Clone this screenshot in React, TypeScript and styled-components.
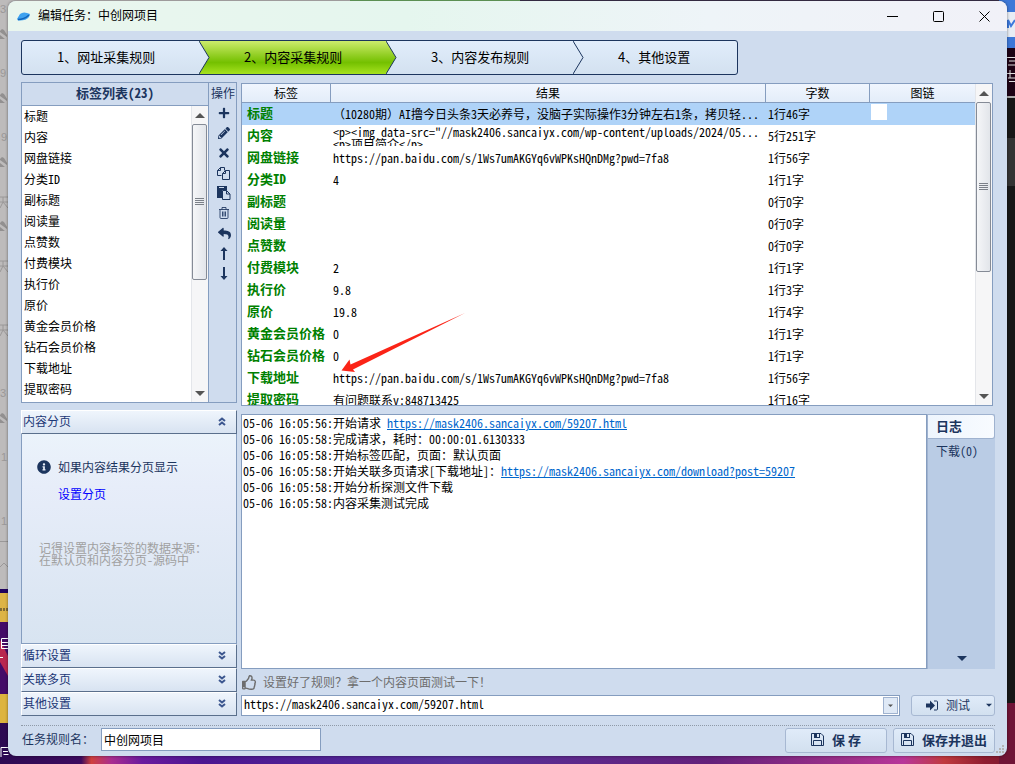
import React, { useState } from 'react';
import styled, { createGlobalStyle, css } from 'styled-components';
import { FaInfoCircle, FaPlus, FaPencilAlt, FaTimes, FaReply, FaRegThumbsUp } from 'react-icons/fa';

const ink = '#1c355e';
const line = '#859dbf';
const face = '#cfdcee';

const GlobalStyle = createGlobalStyle`
  *, *::before, *::after { box-sizing: border-box; }
  body {
    margin: 0;
    font-family: "Noto Sans Mono CJK SC", "Noto Sans CJK SC", monospace;
    font-size: 12px;
    line-height: 16px;
    color: #000;
  }
  button, input { font: inherit; color: inherit; }
  button { padding: 0; cursor: pointer; }
  ul { margin: 0; padding: 0; list-style: none; }
`;

/* ---------- desktop ---------- */

const Desktop = styled.div`
  position: relative;
  display: flex;
  flex-direction: column;
  min-height: 100vh;
  padding: 1px 8px 8px;
  overflow: hidden;
  background:
    linear-gradient(90deg, #c0bdbd 0 350px, #6fae64 350px 520px, #3f3350 520px) top / 100% 2px no-repeat,
    linear-gradient(90deg, #2d0a52, #3d0a5e 8%, #d0403c 9%, #a82c90 11%, #6a1a9e 14%, #4b1590 20%, #57309a 45%, #63207a 70%, #a0308a 84%, #b8359a 89%, #c03a3e 93%, #8f1c30 97%, #7c1830);
`;

const LeftEdge = styled.svg`
  position: absolute;
  left: 0;
  top: 0;
  width: 16px;
  height: 764px;
`;

const RightEdge = styled.svg`
  position: absolute;
  right: 0;
  top: 0;
  width: 16px;
  height: 764px;
`;

const Window = styled.main`
  position: relative;
  flex: 1;
  display: flex;
  flex-direction: column;
  border-radius: 8px;
  overflow: hidden;
  background: ${face};
  box-shadow: 0 0 3px rgba(0, 0, 0, 0.5);
`;

const TitleBar = styled.header`
  display: flex;
  align-items: center;
  height: 30px;
  padding-left: 9px;
  background: linear-gradient(90deg, #eaf6ee, #e5f6ee 40%, #eef4f8 70%, #f1f1f8);
`;

const Title = styled.h1`
  flex: 1;
  margin: 0 0 2px 8px;
  font-family: "Noto Sans CJK SC", sans-serif;
  font-size: 12px;
  font-weight: 400;
  line-height: 16px;
`;

const CaptionButton = styled.button`
  display: grid;
  place-items: center;
  width: 46px;
  height: 28px;
  border: 0;
  background: none;
`;

const Body = styled.div`
  flex: 1;
  display: flex;
  flex-direction: column;
  padding: 9px 12px 0 13px;
`;

/* ---------- wizard steps ---------- */

const Steps = styled.nav`
  display: flex;
  align-self: flex-start;
  width: 717px;
  max-width: 100%;
  height: 35px;
  border: 1px solid ${ink};
  border-radius: 3px;
  background: linear-gradient(#e1edfb, #d3e1f0);
`;

const Step = styled.button<{ $active?: boolean }>`
  position: relative;
  z-index: ${p => (p.$active ? 0 : 1)};
  flex: 0 0 187px;
  padding: 0 0 2px 35px;
  border: 0;
  background: none;
  text-align: left;
  font-family: "Noto Sans CJK SC", sans-serif;
  font-size: 13px;
  &:last-child { flex: 1; }
`;

const Chevron = styled.svg`
  position: absolute;
  left: 177px;
  top: 0;
`;

const ActiveShape = styled.svg`
  position: absolute;
  z-index: -1;
  left: -10px;
  top: 0;
`;

/* ---------- columns ---------- */

const Columns = styled.div`
  flex: 1;
  display: flex;
  gap: 4px;
  padding-top: 7px;
`;

const LeftColumn = styled.div`
  flex: 0 0 216px;
  display: flex;
  flex-direction: column;
  gap: 7px;
`;

const RightColumn = styled.div`
  flex: 1;
  min-width: 0;
  display: flex;
  flex-direction: column;
  padding-top: 1px;
`;

/* ---------- scroll bar ---------- */

const ScrollTrack = styled.div`
  flex: 0 0 17px;
  display: flex;
  flex-direction: column;
  padding-right: 1px;
  border-left: 1px solid #e4e6ea;
  background: #f6f6f7;
`;

const ScrollArrow = styled.button`
  display: grid;
  place-items: center;
  flex: 0 0 18px;
  border: 0;
  background: none;
`;

const ScrollThumb = styled.div<{ $length: number }>`
  display: grid;
  place-items: center;
  height: ${p => p.$length}px;
  border: 1px solid #858b96;
  border-radius: 2px;
  background: linear-gradient(90deg, #f5f6f8, #e2e5ea);
`;

const ScrollSpace = styled.div`
  flex: 1;
`;

/* ---------- tag list ---------- */

const TagPanel = styled.section`
  display: flex;
  height: 321px;
  border: 1px solid ${line};
`;

const TagBox = styled.div`
  flex: 1;
  display: flex;
  flex-direction: column;
  border-right: 1px solid ${line};
`;

const TagHeading = styled.h2`
  flex: 0 0 23px;
  margin: 0;
  padding-top: 1px;
  border-bottom: 1px solid ${line};
  color: ${ink};
  font-size: 13px;
  font-weight: 700;
  line-height: 18px;
  text-align: center;
`;

const TagBody = styled.div`
  flex: 1;
  min-height: 0;
  display: flex;
  background: #fff;
`;

const TagItems = styled.ul`
  flex: 1;
  overflow: hidden;
`;

const TagItem = styled.li`
  height: 21px;
  padding-left: 2px;
  line-height: 20px;
`;

const Tools = styled.div`
  flex: 0 0 27px;
  display: flex;
  flex-direction: column;
  align-items: flex-end;
  padding-right: 1px;
  color: ${ink};
`;

const ToolsTitle = styled.span`
  height: 20px;
  line-height: 20px;
`;

const Tool = styled.button`
  display: grid;
  place-items: center;
  width: 22px;
  height: 20px;
  border: 0;
  background: none;
`;

/* ---------- accordion ---------- */

const Accordion = styled.section`
  flex: 1;
  display: flex;
  flex-direction: column;
`;

const AccordionHead = styled.button`
  display: flex;
  align-items: center;
  justify-content: space-between;
  flex: 0 0 24px;
  padding: 0 10px 2px 1px;
  border: 1px solid #5a6f8c;
  border-top-color: #fff;
  border-left-color: #fff;
  background: linear-gradient(#eff5fc, #d8e3f1);
  color: #1c3776;
`;

const AccordionBody = styled.div`
  flex: 1;
  padding: 25px 15px;
  border: 1px solid ${line};
  border-top: 0;
  background: linear-gradient(#ebf3fb, #e7edf9 25%, #d8e4f1);
  color: ${ink};
`;

const InfoRow = styled.p`
  display: flex;
  align-items: center;
  gap: 7px;
  margin: 0;
`;

const SetupLink = styled.a`
  display: block;
  margin: 11px 0 0 21px;
  color: #00f;
  text-decoration: none;
`;

const Note = styled.p`
  margin: 40px 0 0 2px;
  color: #a0a0a0;
  line-height: 12px;
`;

/* ---------- result table ---------- */

const ResultPanel = styled.section`
  position: relative;
  display: flex;
  height: 323px;
  margin-right: 2px;
  border: 1px solid ${line};
  background: #fff;
  overflow: hidden;
`;

const TableClip = styled.div`
  flex: 1;
  min-width: 0;
  overflow: hidden;
`;

const Table = styled.table`
  width: 100%;
  table-layout: fixed;
  border-collapse: separate;
  border-spacing: 0;
`;

const HeadCell = styled.th<{ $width?: number }>`
  ${p => p.$width && css`width: ${p.$width}px;`}
  height: 19px;
  padding: 0;
  border-right: 1px solid ${line};
  border-bottom: 1px solid ${line};
  background: linear-gradient(#f0f6fe, #e3edf9);
  font-weight: 400;
  &:last-child { border-right: 0; }
`;

const Row = styled.tr<{ $selected?: boolean }>`
  background: ${p => (p.$selected ? '#afd3f8' : '#fff')};
`;

const Cell = styled.td`
  height: 22px;
  padding: 0 2px;
  white-space: nowrap;
`;

const NameCell = styled(Cell)`
  padding: 0 0 2px 5px;
  color: #008000;
  font-size: 13px;
  font-weight: 700;
`;

const ImageCell = styled(Cell)`
  padding: 1px;
  vertical-align: top;
`;

const Value = styled.div<{ $multi?: boolean }>`
  height: ${p => (p.$multi ? 20 : 16)}px;
  line-height: ${p => (p.$multi ? 12 : 16)}px;
  overflow: hidden;
  white-space: pre;
`;

const Thumb = styled.div`
  width: 16px;
  height: 16px;
  background: #fff;
`;

const RedArrow = styled.svg`
  position: absolute;
  left: 98px;
  top: 226px;
`;

/* ---------- log ---------- */

const LogRow = styled.section`
  flex: 1;
  display: flex;
  margin-top: 8px;
`;

const Log = styled.div`
  flex: 1;
  padding-left: 1px;
  border: 1px solid ${line};
  background: #fff;
`;

const LogLine = styled.div`
  height: 16px;
  white-space: pre;
`;

const LogLink = styled.a`
  color: #0066cc;
`;

const LogTabs = styled.div`
  flex: 0 0 68px;
  display: flex;
  flex-direction: column;
  align-items: stretch;
  border-left: 1px solid #9fb2cf;
  background: #bacce5;
  color: ${ink};
`;

const LogTab = styled.button<{ $active?: boolean }>`
  height: 25px;
  padding: 0 0 1px 8px;
  border: 0;
  background: none;
  text-align: left;
  ${p => p.$active && css`
    border: 1px solid #9fb2cf;
    border-left: 0;
    border-radius: 0 3px 3px 0;
    background: linear-gradient(90deg, #eef5fd, #f8fbff);
    font-size: 13px;
    font-weight: 700;
  `}
`;

const TabScroll = styled.button`
  height: 22px;
  margin-top: auto;
  border: 0;
  background: none;
`;

/* ---------- test line ---------- */

const Hint = styled.p`
  display: flex;
  align-items: center;
  gap: 6px;
  height: 26px;
  margin: 0;
  padding-left: 1px;
  color: #6d6d6d;
`;

const TestLine = styled.div`
  display: flex;
  gap: 11px;
  height: 21px;
`;

const Combo = styled.div`
  flex: 1;
  display: flex;
  padding: 1px;
  border: 1px solid ${line};
  background: #fff;
`;

const ComboInput = styled.input`
  flex: 1;
  min-width: 0;
  padding: 0 0 3px 1px;
  border: 0;
  outline: 0;
  background: none;
`;

const ComboButton = styled.button`
  display: grid;
  place-items: center;
  width: 15px;
  border: 1px solid #9fb2cf;
  background: #dfe9f6;
`;

const PushButton = styled.button<{ $width: number }>`
  display: flex;
  align-items: center;
  justify-content: center;
  gap: 8px;
  width: ${p => p.$width}px;
  border: 1px solid #a7b8d2;
  border-radius: 3px;
  background: linear-gradient(#e0ebf9, #d2e0ef);
  color: ${ink};
`;

const SaveButton = styled(PushButton)`
  height: 25px;
  padding-bottom: 2px;
  font-family: "Noto Sans CJK SC", sans-serif;
  font-size: 13px;
  font-weight: 700;
`;

const TestButton = styled(PushButton)`
  justify-content: flex-start;
  padding: 0 2px 1px 14px;
`;

const TestLabel = styled.span`
  flex: 1;
  text-align: left;
`;

/* ---------- footer ---------- */

const Footer = styled.footer`
  display: flex;
  align-items: flex-start;
  gap: 6px;
  height: 31px;
  margin-top: 9px;
  padding-top: 2px;
  border-top: 1px dotted #8f9aa8;
`;

const RuleLabel = styled.label`
  width: 74px;
  padding-left: 1px;
  color: ${ink};
  line-height: 22px;
`;

const RuleInput = styled.input`
  width: 220px;
  height: 23px;
  margin-right: auto;
  padding: 0 2px 1px;
  border: 1px solid ${line};
  border-radius: 0;
  outline: 0;
  background: #fff;
`;

const Grip = styled.svg`
  position: absolute;
  right: 1px;
  bottom: 1px;
`;

/* ---------- icons ---------- */

const Triangle = ({ up, color = '#555', size = 10 }: { up?: boolean; color?: string; size?: number }) => (
  <svg width={size} height={size} viewBox="0 0 10 10" fill={color} aria-hidden="true">
    <path d={up ? 'M0 8 5 3l5 5z' : 'M0 3h10L5 8z'} />
  </svg>
);

const Copy = () => (
  <svg width="14" height="14" viewBox="0 0 14 14" fill="none" stroke="currentColor" aria-hidden="true">
    <path d="M4.500 9.500h-4v-5l3-3h4v3M3.500 1.500v3h-3" />
    <path fill={face} d="M5.500 7.500l3-3h4v9h-7zM8.500 4.500v3h-3" />
  </svg>
);

const Paste = () => (
  <svg width="14" height="14" viewBox="0 0 14 14" fill="none" stroke="currentColor" aria-hidden="true">
    <path fill="currentColor" stroke="none" d="M0 0h10v4H5v8H0z" />
    <path stroke={face} d="M2 1.500h5" />
    <path fill={face} d="M5.500 4.500h4l3.500 3.500v5.500H5.500zM9.500 4.500V8H13" />
  </svg>
);

const Trash = () => (
  <svg width="12" height="12" viewBox="0 0 12 12" fill="none" stroke="currentColor" aria-hidden="true">
    <path d="M1 2.500h10M4 2.500v-2h4v2M2 2.500v8q0 1 1 1h6q1 0 1-1v-8M4.500 4.500v5M6 4.500v5M7.500 4.500v5" strokeOpacity=".85" />
  </svg>
);

const LongArrow = ({ down }: { down?: boolean }) => (
  <svg width="8" height="13" viewBox="0 0 8 13" aria-hidden="true">
    <path
      transform={down ? 'rotate(180 4 6.500)' : undefined}
      d="M3 4v9h2V4h2.500L4 0 .5 4z"
      fill="currentColor"
    />
  </svg>
);

const Floppy = () => (
  <svg width="13" height="13" viewBox="0 0 13 13" fill="none" stroke="currentColor" aria-hidden="true">
    <path d="M.5.5h9.500l2.500 2.500v9.500H.5zM2.500 12.500v-5h8v5" />
    <path fill="currentColor" stroke="none" d="M3 0h6v5H3z" />
    <path fill="#dce8f6" stroke="none" d="M6 1h2v3H6z" />
  </svg>
);

const RunIcon = () => (
  <svg width="12" height="11" viewBox="0 0 12 11" aria-hidden="true">
    <path fill="currentColor" d="M0 3.500h4V.5l5 5-5 5v-3H0z" />
    <path fill="none" stroke="currentColor" d="M8 1h2.500q1 0 1 1v7q0 1-1 1H8" />
  </svg>
);

const DoubleChevron = ({ up }: { up?: boolean }) => (
  <svg width="8" height="9" viewBox="0 0 8 9" fill="none" stroke="#3d578f" strokeWidth="2" aria-hidden="true">
    <path d={up ? 'M1 4l3-2.500L7 4M1 8l3-2.500L7 8' : 'M1 1l3 2.500L7 1M1 5l3 2.500L7 5'} />
  </svg>
);

const Logo = () => (
  <svg width="13" height="9" viewBox="0 0 13 9" aria-hidden="true">
    <path fill="#3ea2f0" d="M3 2Q6-.5 10 1l3 1-1 3Q9 9 1 8.500L0 7z" />
    <path stroke="#1263b8" strokeWidth="1.500" fill="none" d="M1 7.500Q7 7.500 12 3" />
  </svg>
);

function ScrollBar({ length }: { length: number }) {
  return (
    <ScrollTrack>
      <ScrollArrow aria-label="向上滚动"><Triangle up /></ScrollArrow>
      <ScrollThumb $length={length}>
        <svg width="9" height="8" viewBox="0 0 9 8" stroke="#7b8088" aria-hidden="true">
          <path d="M0 .5h9M0 2.500h9M0 4.500h9M0 6.500h9" />
        </svg>
      </ScrollThumb>
      <ScrollSpace />
      <ScrollArrow aria-label="向下滚动"><Triangle /></ScrollArrow>
    </ScrollTrack>
  );
}

function Backdrop() {
  return (
    <>
      <LeftEdge viewBox="0 0 16 764" aria-hidden="true">
        <rect width="16" height="590" fill="#bdbbbb" />
        <g fill="#9a9898" fontSize="11" fontFamily="Liberation Sans, sans-serif">
          <text x="0" y="13">3</text>
          <text x="0" y="77">9</text>
          <text x="1" y="141">9</text>
          <text x="0" y="397">3</text>
          <text x="1" y="461">1</text>
          <text x="1" y="525">1</text>
        </g>
        <g fill="#929090">
          {[38, 102, 166, 230, 422].map(y => (
            <path key={y} d={`M0 ${y - 7}l2-2 2 1 3 5v2l-7-5zM0 ${y - 3}l5 4H0z`} />
          ))}
        </g>
        <g stroke="#9a9898" fill="none">
          {[204, 268, 332].map(y => (
            <path key={y} d={`M0 ${y - 7}h8M0 ${y - 2}h8M3 ${y - 7}v5l-3 6M3 ${y - 2}l5 6`} />
          ))}
          <path d="M0 541.500h8M0 567l4-4 4 4" />
        </g>
        <rect y="589" width="16" height="4" fill="#21045e" />
        <rect y="593" width="16" height="29" fill="#ddb446" />
        <path stroke="#806a35" strokeWidth="3" strokeDasharray="2 1" d="M0 609.500h8" />
        <rect y="622" width="16" height="73" fill="#440b68" />
        <path d="M0 640l8 16v20l-8-14z" fill="#b92750" />
        <g stroke="#fff" fill="none">
          <path d="M1.500 638.500h7M1.500 638.500v10h7M1.500 642.500h7M1.500 645.500h7M0 657.500h3M1 757v-9.500h7M3 751.500h5M3.500 754.500h5" />
        </g>
        <rect y="694" width="16" height="29" fill="#ddb43e" />
      </LeftEdge>
      <RightEdge viewBox="0 0 16 764" aria-hidden="true">
        <rect width="16" height="48" fill="#3d78d8" />
        <rect y="12" width="16" height="25" fill="#e8edf5" />
        <path d="M9 28v-8l3 6 4-6" stroke="#3c78dc" strokeWidth="2" fill="none" />
        <rect y="48" width="16" height="49" fill="#1d0315" />
        <path d="M8 57.500h8M10 61h6M9 65h7M8 73.500h8M11 70v8M9 78h7M10 81.500h6" stroke="#ddd" fill="none" />
        <rect y="96" width="16" height="2" fill="#aaa" />
        <rect y="98" width="16" height="606" fill="#171717" />
        <rect y="138" width="16" height="48" fill="#333" />
        <rect y="703" width="16" height="61" fill="#6f1436" />
      </RightEdge>
    </>
  );
}

/* ---------- data ---------- */

type Result = { name: string; value: string; count: string };

const results: Result[] = [
  { name: '标题', value: '（10280期）AI撸今日头条3天必养号，没脑子实际操作3分钟左右1条，拷贝轻...', count: '1行46字' },
  { name: '内容', value: '<p><img data-src="//mask2406.sancaiyx.com/wp-content/uploads/2024/05...\n<p>项目简介</p>', count: '5行251字' },
  { name: '网盘链接', value: 'https://pan.baidu.com/s/1Ws7umAKGYq6vWPKsHQnDMg?pwd=7fa8', count: '1行56字' },
  { name: '分类ID', value: '4', count: '1行1字' },
  { name: '副标题', value: '', count: '0行0字' },
  { name: '阅读量', value: '', count: '0行0字' },
  { name: '点赞数', value: '', count: '0行0字' },
  { name: '付费模块', value: '2', count: '1行1字' },
  { name: '执行价', value: '9.8', count: '1行3字' },
  { name: '原价', value: '19.8', count: '1行4字' },
  { name: '黄金会员价格', value: '0', count: '1行1字' },
  { name: '钻石会员价格', value: '0', count: '1行1字' },
  { name: '下载地址', value: 'https://pan.baidu.com/s/1Ws7umAKGYq6vWPKsHQnDMg?pwd=7fa8', count: '1行56字' },
  { name: '提取密码', value: '有问题联系v:848713425', count: '1行16字' },
];

const logs = [
  { text: '05-06 16:05:56:开始请求 ', link: 'https://mask2406.sancaiyx.com/59207.html' },
  { text: '05-06 16:05:58:完成请求，耗时：00:00:01.6130333' },
  { text: '05-06 16:05:58:开始标签匹配，页面：默认页面' },
  { text: '05-06 16:05:58:开始关联多页请求[下载地址]：', link: 'https://mask2406.sancaiyx.com/download?post=59207' },
  { text: '05-06 16:05:58:开始分析探测文件下载' },
  { text: '05-06 16:05:58:内容采集测试完成' },
];

const steps = ['1、网址采集规则', '2、内容采集规则', '3、内容发布规则', '4、其他设置'];

const tools = [
  { label: '添加', icon: <FaPlus size={12} /> },
  { label: '编辑', icon: <FaPencilAlt size={12} /> },
  { label: '删除', icon: <FaTimes size={14} /> },
  { label: '复制', icon: <Copy /> },
  { label: '粘贴', icon: <Paste /> },
  { label: '清空', icon: <Trash /> },
  { label: '撤销', icon: <FaReply size={13} /> },
  { label: '上移', icon: <LongArrow /> },
  { label: '下移', icon: <LongArrow down /> },
];

export default function App() {
  const [url, setUrl] = useState('https://mask2406.sancaiyx.com/59207.html');
  const [ruleName, setRuleName] = useState('中创网项目');

  return (
    <Desktop>
      <GlobalStyle />
      <Backdrop />
      <Window>
        <TitleBar>
          <Logo />
          <Title>编辑任务：中创网项目</Title>
          <CaptionButton aria-label="最小化">
            <svg width="11" height="11" stroke="#000"><path d="M0 5.500h11" /></svg>
          </CaptionButton>
          <CaptionButton aria-label="最大化">
            <svg width="11" height="11" stroke="#000" fill="none"><rect x=".5" y=".5" width="10" height="10" rx="1" /></svg>
          </CaptionButton>
          <CaptionButton aria-label="关闭">
            <svg width="11" height="11" stroke="#000"><path d="M.5.5l10 10M10.500.5l-10 10" /></svg>
          </CaptionButton>
        </TitleBar>

        <Body>
          <Steps>
            {steps.map((step, i) => (
              <Step key={step} $active={i === 1}>
                {i === 1 && (
                  <ActiveShape width="198" height="33" viewBox="0 0 198 33" aria-hidden="true">
                    <defs>
                      <linearGradient id="go" x1="0" y1="0" x2="0" y2="1">
                        <stop offset="0" stopColor="#cdec6c" />
                        <stop offset=".45" stopColor="#8fcd20" />
                        <stop offset=".65" stopColor="#74c000" />
                        <stop offset="1" stopColor="#a6e21f" />
                      </linearGradient>
                    </defs>
                    <path fill="url(#go)" d="M0 0h187l10 16.500L187 33H0l10-16.500z" />
                  </ActiveShape>
                )}
                {step}
                {i < 3 && (
                  <Chevron width="12" height="33" fill="none" stroke={ink} aria-hidden="true">
                    <path d="M0 0l10 16.500L0 33" />
                  </Chevron>
                )}
              </Step>
            ))}
          </Steps>

          <Columns>
            <LeftColumn>
              <TagPanel>
                <TagBox>
                  <TagHeading>标签列表(23)</TagHeading>
                  <TagBody>
                    <TagItems>
                      {results.map(r => <TagItem key={r.name}>{r.name}</TagItem>)}
                    </TagItems>
                    <ScrollBar length={156} />
                  </TagBody>
                </TagBox>
                <Tools>
                  <ToolsTitle>操作</ToolsTitle>
                  {tools.map(t => <Tool key={t.label} aria-label={t.label}>{t.icon}</Tool>)}
                </Tools>
              </TagPanel>

              <Accordion>
                <AccordionHead>内容分页<DoubleChevron up /></AccordionHead>
                <AccordionBody>
                  <InfoRow><FaInfoCircle size={14} />如果内容结果分页显示</InfoRow>
                  <SetupLink href="#paging">设置分页</SetupLink>
                  <Note>记得设置内容标签的数据来源：<br />在默认页和内容分页-源码中</Note>
                </AccordionBody>
                {['循环设置', '关联多页', '其他设置'].map(name => (
                  <AccordionHead key={name}>{name}<DoubleChevron /></AccordionHead>
                ))}
              </Accordion>
            </LeftColumn>

            <RightColumn>
              <ResultPanel>
                <TableClip>
                  <Table>
                    <thead>
                      <tr>
                        <HeadCell $width={89}>标签</HeadCell>
                        <HeadCell>结果</HeadCell>
                        <HeadCell $width={104}>字数</HeadCell>
                        <HeadCell $width={105}>图链</HeadCell>
                      </tr>
                    </thead>
                    <tbody>
                      {results.map((r, i) => (
                        <Row key={r.name} $selected={i === 0}>
                          <NameCell>{r.name}</NameCell>
                          <Cell><Value $multi={r.value.includes('\n')}>{r.value}</Value></Cell>
                          <Cell>{r.count}</Cell>
                          <ImageCell>{i === 0 && <Thumb />}</ImageCell>
                        </Row>
                      ))}
                    </tbody>
                  </Table>
                </TableClip>
                <ScrollBar length={170} />
                <RedArrow width="126" height="64" viewBox="0 0 126 64" aria-hidden="true">
                  <path fill="#fb2417" d="M1.500 60.500 9.500 49.500l1 5L125 3 13 59.500l2 2.500z" />
                </RedArrow>
              </ResultPanel>

              <LogRow>
                <Log>
                  {logs.map(l => (
                    <LogLine key={l.text}>{l.text}{l.link && <LogLink href={l.link}>{l.link}</LogLink>}</LogLine>
                  ))}
                </Log>
                <LogTabs>
                  <LogTab $active>日志</LogTab>
                  <LogTab>下载(0)</LogTab>
                  <TabScroll aria-label="更多"><Triangle color={ink} size={10} /></TabScroll>
                </LogTabs>
              </LogRow>

              <Hint><FaRegThumbsUp size={15} />设置好了规则？拿一个内容页面测试一下！</Hint>
              <TestLine>
                <Combo>
                  <ComboInput aria-label="测试网址" value={url} onChange={e => setUrl(e.target.value)} />
                  <ComboButton aria-label="历史网址"><Triangle size={5} /></ComboButton>
                </Combo>
                <TestButton $width={84}><RunIcon /><TestLabel>测试</TestLabel><Triangle color={ink} size={6} /></TestButton>
              </TestLine>
            </RightColumn>
          </Columns>

          <Footer>
            <RuleLabel htmlFor="rule-name">任务规则名：</RuleLabel>
            <RuleInput id="rule-name" value={ruleName} onChange={e => setRuleName(e.target.value)} />
            <SaveButton $width={102}><Floppy />保 存</SaveButton>
            <SaveButton $width={102}><Floppy />保存并退出</SaveButton>
          </Footer>
        </Body>
        <Grip width="10" height="10" fill="#b3b3b3" aria-hidden="true">
          <path d="M6 0h2v2H6zM3 3h2v2H3zM6 3h2v2H6zM0 6h2v2H0zM3 6h2v2H3zM6 6h2v2H6z" />
        </Grip>
      </Window>
    </Desktop>
  );
}
